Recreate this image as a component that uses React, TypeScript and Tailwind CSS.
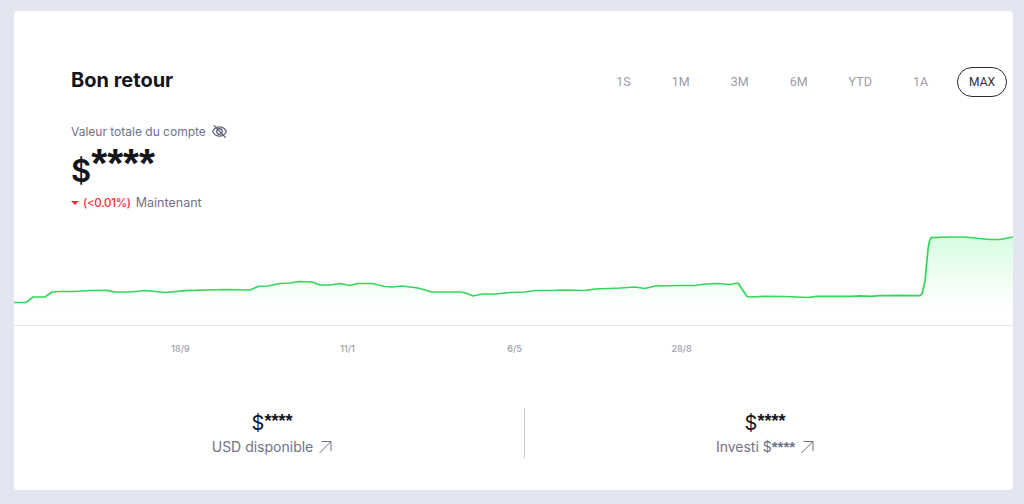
const ranges = ['1S', '1M', '3M', '6M', 'YTD', '1A', 'MAX'];
const ticks = ['18/9', '11/1', '6/5', '28/8'];

const linePoints =
  '14,302.5 26,302.5 33,297 45,297 52,292 60,291.5 75,291.5 90,290.5 107,290.3 115,292 130,292 146,290.5 165,292.5 185,290.7 205,290 225,289.5 250,290 258,286.5 268,286 280,283.5 290,283 300,281.5 312,282 320,285 330,285 340,283.5 350,285.5 358,283.5 372,283.5 385,286.5 392,287 402,286 418,288 432,292 460,292 466,293 473,296 482,294 495,294 510,292.5 525,292 535,290.5 550,290.5 565,290 585,290.5 595,289 620,288 635,287 645,288.5 655,286 680,285.5 695,285.5 705,284 718,283.5 730,284.5 738,283 747,296.5 750,297 765,296.3 785,296.5 808,297.5 817,296.3 850,296.3 860,295.8 870,296.3 880,295.7 900,295.3 920,295.7 922,294 925,281 928,249 929.5,241 931,237.7 950,237 965,237 975,238 990,239.5 1000,239.5 1013,237';

function Chart() {
  return (
    <svg viewBox="14 230 999 95" className="block w-full h-[95px]">
      <defs>
        <linearGradient id="chartFill" gradientUnits="userSpaceOnUse" x1="0" y1="237" x2="0" y2="308">
          <stop offset="0%" stopColor="#d9fce1" />
          <stop offset="100%" stopColor="#ffffff" />
        </linearGradient>
      </defs>
      <polygon points={`${linePoints} 1013,325 14,325`} fill="url(#chartFill)" />
      <polyline points={linePoints} fill="none" stroke="#35d65c" strokeWidth="1.7" strokeLinejoin="round" />
    </svg>
  );
}

function HiddenEye() {
  return (
    <svg viewBox="0 0 16 16" className="w-[17px] h-[17px]" fill="none" stroke="#5f6279" strokeWidth="1.2" strokeLinecap="round">
      <path d="M1.5 8C3 5 5.3 3.6 8 3.6S13 5 14.5 8C13 11 10.7 12.4 8 12.4S3 11 1.5 8Z" />
      <circle cx="8" cy="8" r="2.6" />
      <path d="M3 2.5 13.5 13.5" />
    </svg>
  );
}

function LinkArrow() {
  return (
    <svg viewBox="0 0 14 14" className="w-[14px] h-[14px]" fill="none" stroke="#6f7287" strokeWidth="1">
      <path d="M1.5 13 13 1.5M3.5 1.5H13V11" />
    </svg>
  );
}

function Masked() {
  return (
    <div className="flex items-start h-[26px] text-[#14151a]">
      <span className="text-[20px] leading-[26px]">$</span>
      <span className="text-[18px] leading-[18px] mt-[2px] font-bold font-['Liberation_Sans',sans-serif]">****</span>
    </div>
  );
}

export default function App() {
  return (
    <div className="h-[504px] w-[1024px] bg-[#e3e6f0] pt-[11px] pl-[14px] font-['Inter',sans-serif] overflow-hidden">
      <div className="w-[999px] h-[479px] bg-white rounded flex flex-col">
        {/* header */}
        <div className="flex items-start justify-between pt-[56px] pl-[57px] pr-[6px]">
          <h1 className="text-[20px] leading-[26px] font-bold text-[#14151a]">Bon retour</h1>
          <div className="flex items-center gap-[17px]">
            {ranges.map((r) => (
              <button
                key={r}
                className={
                  r === 'MAX'
                    ? "h-[30px] px-[11px] rounded-full border border-[#2b2d36] text-xs text-[#2b2d36] font-['Roboto',sans-serif]"
                    : "h-[30px] px-[12px] text-[12.5px] text-[#9a9ca6] font-['Roboto',sans-serif]"
                }
              >
                {r}
              </button>
            ))}
          </div>
        </div>

        {/* balance */}
        <div className="pl-[57px] mt-[26px]">
          <div className="flex items-center gap-[5px] text-xs leading-[16px] text-[#6f7287]">
            Valeur totale du compte
            <HiddenEye />
          </div>
          <div className="flex items-start h-[44px] mt-[1px] text-[#14151a]">
            <span className="text-[31px] leading-[44px] font-semibold mt-[8px]">$</span>
            <span className="text-[41px] leading-[41px] font-bold mt-[2px] font-['Liberation_Sans',sans-serif]">****</span>
          </div>
          <div className="flex items-center text-xs leading-[16px] mt-[10px]">
            <span className="w-0 h-0 border-x-[4px] border-x-transparent border-t-[4px] border-t-[#ff2a35] mr-[4px]" />
            <span className="text-[#ff2a35] font-medium mr-[5px] text-[11.5px] tracking-tight">(&lt;0.01%)</span>
            <span className="text-[#6f7287] text-[12.5px]">Maintenant</span>
          </div>
        </div>

        {/* chart */}
        <div className="mt-[19px] border-b border-[#e4e5ea]">
          <Chart />
        </div>
        <div className="flex pl-[83px] mt-[17px]">
          {ticks.map((t) => (
            <span key={t} className="w-[167px] text-center text-[9px] leading-[12px] font-medium text-[#9a9ca6]">
              {t}
            </span>
          ))}
        </div>

        {/* stats */}
        <div className="flex mt-[53px] h-[50px]">
          <div className="w-[511px] border-r border-[#c9ccd8] flex flex-col items-center pl-[6px] pt-[2px]">
            <Masked />
            <div className="flex items-center gap-[5px] text-sm leading-[20px] mt-[1px] text-[#6f7287]">
              USD disponible
              <LinkArrow />
            </div>
          </div>
          <div className="flex-1 flex flex-col items-center pr-[8px] pt-[2px]">
            <Masked />
            <div className="flex items-center gap-[5px] text-sm leading-[20px] mt-[1px] text-[#6f7287]">
              <span>
                Investi $<span className="text-[15px] font-bold font-['Liberation_Sans',sans-serif]">****</span>
              </span>
              <LinkArrow />
            </div>
          </div>
        </div>
      </div>
    </div>
  );
}
